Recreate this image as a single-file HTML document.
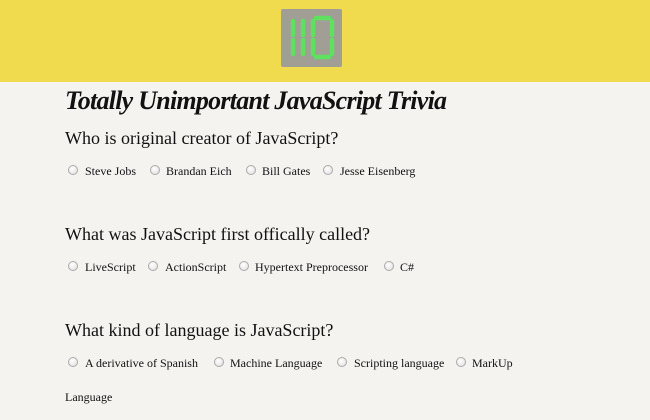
<!DOCTYPE html>
<html><head><style>
body{margin:0;width:650px;height:420px;background:#f5f3f0;font-family:"Liberation Serif",serif;color:#111;position:relative;overflow:hidden}
.hdr{position:absolute;left:0;top:0;width:650px;height:82px;background:#f0da4e}
.logo{position:absolute;left:281px;top:9px;width:61px;height:58px;background:#a19e95;border-radius:2px}
.t{position:absolute;white-space:nowrap}
h1{position:absolute;left:65px;top:86px;margin:0;font:italic bold 26px "Liberation Serif",serif;letter-spacing:-0.75px;white-space:nowrap}
.q{font-size:18px;line-height:20px}
.o{font-size:12px;line-height:14px}
.r{position:absolute;width:8px;height:8px;border-radius:50%;border:1px solid #aaa;background:radial-gradient(circle at 40% 35%,#fff,#ddd)}
</style></head><body>
<div class="hdr"><div class="logo">
<svg width="61" height="58" viewBox="0 0 61 58"><g stroke="#5fe05f" stroke-width="4.5" stroke-linecap="round" fill="none">
<path d="M12 12 V26 M12 31 V45 M22 12 V26 M22 31 V45 M35 9 H48 M32 12 V26 M32 31 V45 M51 12 V26 M51 31 V45 M35 48 H48"/></g></svg>
</div></div>
<h1>Totally Unimportant JavaScript Trivia</h1>
<div class="t q" style="left:65px;top:128px">Who is original creator of JavaScript?</div>
<span class="r" style="left:68px;top:165px"></span><div class="t o" style="left:85px;top:164px">Steve Jobs</div>
<span class="r" style="left:150px;top:165px"></span><div class="t o" style="left:166px;top:164px">Brandan Eich</div>
<span class="r" style="left:246px;top:165px"></span><div class="t o" style="left:262px;top:164px">Bill Gates</div>
<span class="r" style="left:323px;top:165px"></span><div class="t o" style="left:340px;top:164px">Jesse Eisenberg</div>
<div class="t q" style="left:65px;top:224px">What was JavaScript first offically called?</div>
<span class="r" style="left:68px;top:261px"></span><div class="t o" style="left:85px;top:260px">LiveScript</div>
<span class="r" style="left:148px;top:261px"></span><div class="t o" style="left:165px;top:260px">ActionScript</div>
<span class="r" style="left:239px;top:261px"></span><div class="t o" style="left:255px;top:260px">Hypertext Preprocessor</div>
<span class="r" style="left:384px;top:261px"></span><div class="t o" style="left:400px;top:260px">C#</div>
<div class="t q" style="left:65px;top:320px">What kind of language is JavaScript?</div>
<span class="r" style="left:68px;top:357px"></span><div class="t o" style="left:85px;top:356px">A derivative of Spanish</div>
<span class="r" style="left:214px;top:357px"></span><div class="t o" style="left:230px;top:356px">Machine Language</div>
<span class="r" style="left:337px;top:357px"></span><div class="t o" style="left:354px;top:356px">Scripting language</div>
<span class="r" style="left:456px;top:357px"></span><div class="t o" style="left:472px;top:356px">MarkUp</div>
<div class="t o" style="left:65px;top:390px">Language</div>
</body></html>
